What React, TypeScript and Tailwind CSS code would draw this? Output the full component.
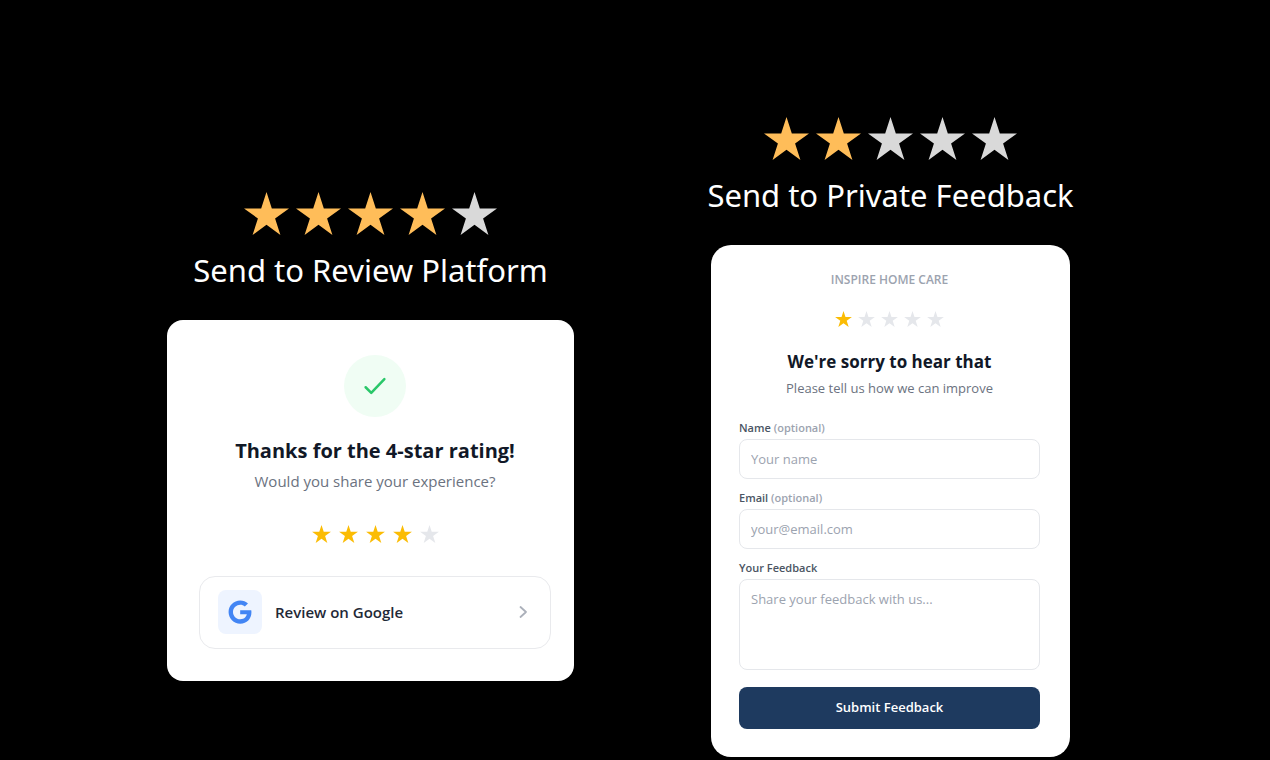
import type { ReactNode } from "react";

type StarsProps = {
  filled: number;
  label: string;
  size: string;
  gap: string;
  on: string;
  off: string;
};

function Stars({ filled, label, size, gap, on, off }: StarsProps) {
  return (
    <div role="img" aria-label={label} className={`flex ${gap}`}>
      {[0, 1, 2, 3, 4].map((i) => (
        <svg key={i} viewBox="0 0 44 42" className={`${size} ${i < filled ? on : off}`} fill="currentColor" aria-hidden="true">
          <path d="M22 0 27.2 16H44L30.4 25.9 35.6 42 22 32 8.4 42 13.6 25.9 0 16H16.8Z" />
        </svg>
      ))}
    </div>
  );
}

function Route({ title, filled, width, children }: { title: string; filled: number; width: string; children: ReactNode }) {
  return (
    <section className={`flex w-full flex-col items-center ${width}`}>
      <Stars
        filled={filled}
        label={`${filled} out of 5 stars`}
        size="h-[43px] w-[45px]"
        gap="gap-[7px]"
        on="text-[#ffbd59]"
        off="text-[#d9d9d9]"
      />
      <h2 className="mt-[15px] mb-[30px] font-['Noto_Sans',sans-serif] text-[31px] leading-10 whitespace-nowrap text-white">{title}</h2>
      {children}
    </section>
  );
}

function Field({ id, label, optional, children }: { id: string; label: string; optional?: boolean; children: ReactNode }) {
  return (
    <div className="flex flex-col gap-[3px]">
      <label htmlFor={id} className="text-[11px] leading-4 font-semibold text-[#4b5563]">
        {label}
        {optional && <span className="text-[#9ca3af]"> (optional)</span>}
      </label>
      {children}
    </div>
  );
}

const inputStyle =
  "w-full rounded-lg border border-[#e5e7eb] bg-white px-[11px] text-[13px] text-[#111827] placeholder:text-[#9ca3af]";

export default function App() {
  return (
    <main className="flex min-h-screen flex-wrap items-center justify-center gap-x-[137px] gap-y-16 bg-black pt-[116px] pr-[33px] pb-[3px] font-['Open_Sans','Noto_Sans',sans-serif]">
      <Route title="Send to Review Platform" filled={4} width="max-w-[407px]">
        <div className="flex w-full flex-col items-center rounded-2xl bg-white pt-[35px] pr-[23px] pb-8 pl-8">
          <div className="flex size-[62px] items-center justify-center rounded-full bg-[#f0fdf4]">
            <svg viewBox="0 0 24 24" className="size-[30px] text-[#2ac769]" fill="none" stroke="currentColor" strokeWidth="2" strokeLinecap="round" strokeLinejoin="round" aria-hidden="true">
              <path d="M4.5 13 9 17.5 19.5 6.5" />
            </svg>
          </div>
          <h3 className="mt-5 text-[20px] leading-7 font-bold text-[#111827]">Thanks for the 4-star rating!</h3>
          <p className="mt-1 text-[15px] leading-6 text-[#6b7280]">Would you share your experience?</p>
          <div className="mt-8 mb-[33px]">
            <Stars filled={4} label="You rated 4 out of 5" size="h-[18px] w-[19px]" gap="gap-2" on="text-[#fbbc04]" off="text-[#e5e7eb]" />
          </div>
          <a href="#google" className="flex w-full items-center gap-[13px] rounded-2xl border border-[#e9eaed] px-[18px] pt-[13px] pb-[14px]">
            <span className="flex size-11 items-center justify-center rounded-lg bg-[#eef4ff]">
              <svg viewBox="0 0 488 512" className="size-6" fill="#4285f4" aria-hidden="true">
                <path d="M488 261.8C488 403.3 391.1 504 248 504 110.8 504 0 393.2 0 256S110.8 8 248 8c66.8 0 123 24.5 166.3 64.9l-67.5 64.9C258.5 52.6 94.3 116.6 94.3 256c0 86.5 69.1 156.6 153.7 156.6 98.2 0 135-70.4 140.8-106.9H248v-85.3h236.1c2.3 12.7 3.9 24.9 3.9 41.4z" />
              </svg>
            </span>
            <span className="flex-1 text-[15px] leading-6 font-semibold text-[#1f2937]">Review on Google</span>
            <svg viewBox="0 0 18 18" className="size-[18px] text-[#abb0ba]" fill="none" stroke="currentColor" strokeWidth="1.8" strokeLinecap="round" strokeLinejoin="round" aria-hidden="true">
              <path d="M6.5 4 12 9 6.5 14" />
            </svg>
          </a>
        </div>
      </Route>

      <Route title="Send to Private Feedback" filled={2} width="max-w-[359px]">
        <form className="flex w-full flex-col rounded-[20px] bg-white pt-[27px] pr-[30px] pb-7 pl-7" onSubmit={(e) => e.preventDefault()}>
          <div className="flex flex-col items-center">
            <p className="text-[12px] leading-4 font-semibold text-[#9ca3af] uppercase">Inspire Home Care</p>
            <div className="mt-[23px] mb-[21px]">
              <Stars filled={1} label="You rated 1 out of 5" size="h-4 w-[17px]" gap="gap-[6px]" on="text-[#fbbc04]" off="text-[#e5e7eb]" />
            </div>
            <h3 className="text-[17px] leading-7 font-bold text-[#111827]">We're sorry to hear that</h3>
            <p className="mt-[2px] text-[13px] leading-5 text-[#6b7280]">Please tell us how we can improve</p>
          </div>
          <div className="mt-[22px] mb-[17px] flex flex-col gap-[11px]">
            <Field id="name" label="Name" optional>
              <input id="name" type="text" placeholder="Your name" className={`${inputStyle} h-10`} />
            </Field>
            <Field id="email" label="Email" optional>
              <input id="email" type="email" placeholder="your@email.com" className={`${inputStyle} h-10`} />
            </Field>
            <Field id="feedback" label="Your Feedback">
              <textarea id="feedback" placeholder="Share your feedback with us..." className={`${inputStyle} block h-[91px] resize-none py-[9px] leading-5`} />
            </Field>
          </div>
          <button type="submit" className="h-[42px] w-full rounded-lg bg-[#1e3a5f] text-[13px] font-semibold text-white">
            Submit Feedback
          </button>
        </form>
      </Route>
    </main>
  );
}
